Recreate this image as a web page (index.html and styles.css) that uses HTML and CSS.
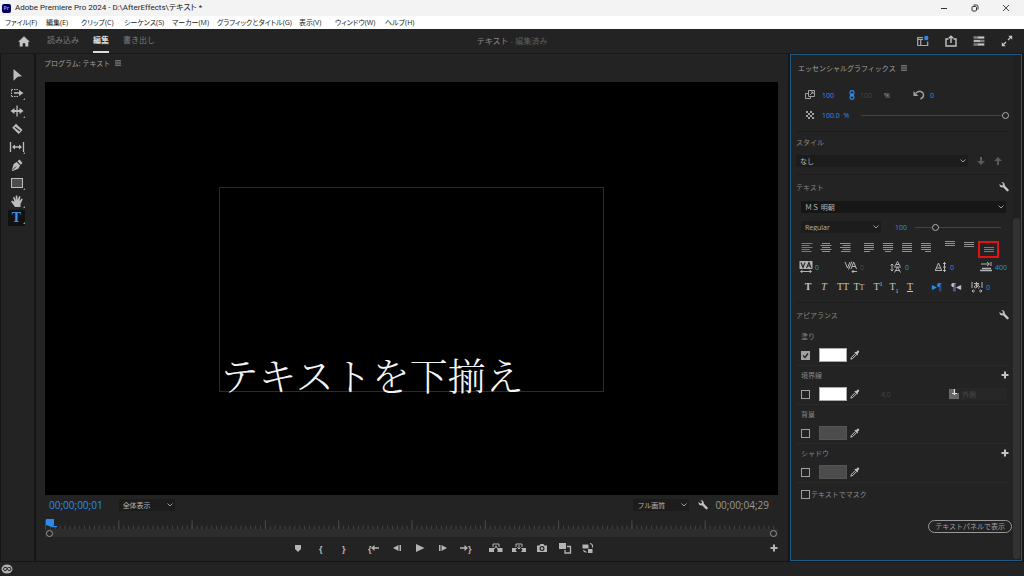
FILE: index.html
```html
<!DOCTYPE html>
<html lang="ja">
<head>
<meta charset="utf-8">
<title>Adobe Premiere Pro 2024</title>
<link rel="stylesheet" href="styles.css">
</head>
<body>
<svg class="sprite" aria-hidden="true">
  <symbol id="menu" viewBox="0 0 6 6"><path d="M0 .8h6M0 3h6M0 5.2h6" stroke="currentColor" stroke-width=".9"/></symbol>
  <symbol id="wrench" viewBox="0 0 10 10"><path d="M.6 1.9 2.3 3.6 3.8 3.2 4 1.8 2.4.4C4.200-.2 6.100 1.200 5.700 3.500L9.500 7.600c.9 1.200-.8 2.600-1.800 1.500L4 5.300C1.700 5.900.1 4 .6 1.900z" fill="currentColor"/></symbol>
  <symbol id="plus" viewBox="0 0 8 8"><path d="M4 .5v7M.5 4h7" stroke="currentColor" stroke-width="2"/></symbol>
  <symbol id="dropper" viewBox="0 0 10 10"><path d="M6 2.200 7.300.9c1-.9 2.500.5 1.600 1.600L7.600 3.800l.5.8-.9.8L4.400 2.600l.8-.9z" fill="currentColor"/><path d="M5 3.800 1.500 7.300.8 9.200l1.900-.7L6.200 5" fill="none" stroke="currentColor" stroke-width="1"/></symbol>
  <symbol id="al" viewBox="0 0 12 10"><path d="M.5 1.500h11M.5 3.500h8M.5 5.500h11M.5 7.500h8M.5 9.500h10" stroke="currentColor"/></symbol>
  <symbol id="ac" viewBox="0 0 12 10"><path d="M2 1.500h8M.5 3.500h11M2 5.500h8M.5 7.500h11M2 9.500h8" stroke="currentColor"/></symbol>
  <symbol id="ar" viewBox="0 0 12 10"><path d="M1 1.500h10.500M3.500 3.500h8M1 5.500h10.500M3.500 7.500h8M2 9.500h9.500" stroke="currentColor"/></symbol>
  <symbol id="jl" viewBox="0 0 12 10"><path d="M1 1.500h10M1 3.500h10M1 5.500h10M1 7.500h10M1 9.500h6" stroke="currentColor"/></symbol>
  <symbol id="jc" viewBox="0 0 12 10"><path d="M1 1.500h10M1 3.500h10M1 5.500h10M1 7.500h10M3 9.500h6" stroke="currentColor"/></symbol>
  <symbol id="jf" viewBox="0 0 12 10"><path d="M1 1.500h10M1 3.500h10M1 5.500h10M1 7.500h10M1 9.500h10" stroke="currentColor"/></symbol>
  <symbol id="jr" viewBox="0 0 12 10"><path d="M1 1.500h10M1 3.500h10M1 5.500h10M1 7.500h10M5 9.500h6" stroke="currentColor"/></symbol>
  <symbol id="vt" viewBox="0 0 12 10"><path d="M1 1.500h10M1 3.500h10M1 5.500h10" stroke="currentColor"/></symbol>
  <symbol id="vm" viewBox="0 0 12 10"><path d="M1 2.500h10M1 4.500h10M1 6.500h10" stroke="currentColor"/></symbol>
  <symbol id="vb" viewBox="0 0 12 10"><path d="M1 3.500h10M1 5.500h10M1 7.500h10" stroke="currentColor"/></symbol>
</svg>

<header class="titlebar">
  <svg class="app" viewBox="0 0 9 9"><rect width="9" height="9" rx="2" fill="#00005b"/><text x="1.600" y="6.400" font-size="5" font-weight="bold" fill="#99f" font-family="Open Sans">Pr</text></svg>
  <h1>Adobe Premiere Pro 2024 - D:\AfterEffects\テキスト *</h1>
  <div class="window-buttons">
    <button aria-label="最小化"><svg viewBox="0 0 8 8"><path d="M1 4.500h6" stroke="#333"/></svg></button>
    <button aria-label="元に戻す"><svg viewBox="0 0 8 8" fill="none" stroke="#333"><rect x="1" y="2.500" width="4.500" height="4.500" rx="1"/><path d="M2.500 1h3q1.500 0 1.500 1.500v3"/></svg></button>
    <button aria-label="閉じる"><svg viewBox="0 0 8 8"><path d="M1 1l6 6M7 1 1 7" stroke="#333" stroke-width=".9"/></svg></button>
  </div>
</header>
<nav class="menubar">
  <a href="#">ファイル(F)</a><a href="#">編集(E)</a><a href="#">クリップ(C)</a><a href="#">シーケンス(S)</a><a href="#">マーカー(M)</a><a href="#">グラフィックとタイトル(G)</a><a href="#">表示(V)</a><a href="#">ウィンドウ(W)</a><a href="#">ヘルプ(H)</a>
</nav>
<div class="workspace">
  <nav class="tabs">
    <a class="home" href="#" aria-label="ホーム"><svg viewBox="0 0 12 11"><path d="M6 .3 11.800 5.700h-1.500V10.500H7.300V7.200H4.700v3.300H1.700V5.700H.2z" fill="#c4c4c4"/></svg></a>
    <a href="#">読み込み</a><a class="active" href="#">編集</a><a href="#">書き出し</a>
  </nav>
  <p class="project">テキスト <span>- 編集済み</span></p>
  <div class="workspace-tools">
    <button aria-label="ワークスペース"><svg viewBox="0 0 12 12"><path d="M6 2.500H.7v8h10V6.500M.7 4.300H6M3.700 4v6" fill="none" stroke="#a8a8a8" stroke-width="1.200"/><circle cx="9.300" cy="3" r="2.200" fill="#2d8ceb"/></svg></button>
    <button aria-label="クイック書き出し"><svg viewBox="0 0 12 12" fill="none" stroke="#c4c4c4" stroke-width="1.400"><path d="M3.500 4H1v7h10V4H8.500M6 8V1.500M3.800 3.300 6 1.200l2.200 2.100"/></svg></button>
    <button aria-label="進行状況"><svg viewBox="0 0 12 12"><path d="M.5 2.500h11M.5 6h11M.5 9.500h11" stroke="#808080" stroke-width="2.400"/><path d="M5 2.500h6M1 6h6M5 9.500h6" stroke="#c8c8c8" stroke-width="1.300"/></svg></button>
    <button aria-label="全画面"><svg viewBox="0 0 12 12"><path d="M10.500 1.500 7 5M5 7l-3.500 3.500" stroke="#c4c4c4" stroke-width="1.300"/><path d="M7.200.8h4v4zM.8 7.200v4h4z" fill="#c4c4c4"/></svg></button>
  </div>
</div>

<main>
  <aside class="tools">
    <button aria-label="選択"><svg viewBox="0 0 16 16"><path d="M4.500 2 13 9.200l-4.200.5-4.300 4z"/></svg></button>
    <button class="more" aria-label="トラックの前方選択"><svg viewBox="0 0 16 16"><path d="M2.500 4.500H10M2.500 11.500H10M2.500 5v6" fill="none" stroke="currentColor" stroke-dasharray="1.500 1"/><path d="M5 7.200h5V5l4.500 3L10 11V8.800H5z"/></svg></button>
    <button class="more" aria-label="リップル"><svg viewBox="0 0 16 16"><path d="M7.400 2.500h1.300v11H7.400zM1.500 8l4-3v2h5V5l4 3-4 3V9h-5v2z"/></svg></button>
    <button aria-label="レーザー"><svg viewBox="0 0 16 16"><path d="M7 2.800 13.500 9l-3.800 4L3.200 6.800z"/><path d="m6 6.200 5 3.800" stroke="#232323" stroke-width="1.200"/></svg></button>
    <button class="more" aria-label="スリップ"><svg viewBox="0 0 16 16"><path d="M1.500 3v10M14.500 3v10M5 8h6" stroke="currentColor" stroke-width="1.300"/><path d="m3 8 3-2.500v5zM13 8l-3-2.500v5z"/></svg></button>
    <button aria-label="ペン"><svg viewBox="0 0 16 16"><path d="M10.500 2.500 13.500 6 11.800 7.700 8.500 4.300zM7.700 5l3.500 3.500-2 3.200L3.500 14 2.800 13.300 4.600 7z"/><path d="m3.500 13 3.500-3.500" stroke="#232323" stroke-width=".9"/></svg></button>
    <button class="more" aria-label="長方形"><svg viewBox="0 0 16 16"><rect x="2.500" y="3.500" width="11" height="9" fill="#4c4c4c" stroke="currentColor"/></svg></button>
    <button class="more" aria-label="手のひら"><svg viewBox="0 0 16 16"><path d="m6 14-4-5.500 1.200-.9L5.500 9 4 4.200l1.300-.5L6.700 7 6.800 2.500h1.400L8.700 7l1.400-4 1.300.4L10.600 8l2-2.600 1.200.7L11.500 11v3z"/></svg></button>
    <button class="more type" aria-label="横書き文字"><span>T</span></button>
  </aside>

  <section class="program">
    <h2>プログラム: テキスト <svg><use href="#menu"/></svg></h2>
    <div class="monitor"><div class="text-frame"><p>テキストを下揃え</p></div></div>
    <div class="monitor-controls">
      <time class="current">00;00;00;01</time>
      <select aria-label="ズーム"><option>全体表示</option></select>
      <span class="spacer"></span>
      <select aria-label="画質"><option>フル画質</option></select>
      <button class="icon" aria-label="設定"><svg><use href="#wrench"/></svg></button>
      <time>00;00;04;29</time>
    </div>
    <div class="timeline">
      <svg class="ruler" viewBox="0 0 733 10" preserveAspectRatio="none">
        <defs>
          <pattern id="minor" width="4.887" height="10" patternUnits="userSpaceOnUse"><path d="M.5 7v3" stroke="#444"/></pattern>
          <pattern id="major" width="73.300" height="10" patternUnits="userSpaceOnUse"><path d="M.5 2v8" stroke="#484848"/></pattern>
        </defs>
        <rect width="733" height="10" fill="url(#minor)"/><rect width="733" height="10" fill="url(#major)"/>
      </svg>
      <svg class="playhead" viewBox="0 0 12 10"><path d="M1 1h8v6l-1 1h4v1.200H7.500L1 7z" fill="#2d8ceb"/></svg>
      <div class="zoombar"><i></i><i></i></div>
    </div>
    <div class="transport">
      <div class="group">
        <button aria-label="マーカーを追加"><svg viewBox="0 0 14 12"><path d="M4 3h6v4L7 10 4 7z"/></svg></button>
        <button aria-label="インをマーク">{</button>
        <button aria-label="アウトをマーク">}</button>
      </div>
      <div class="group">
        <button aria-label="インへ移動">{<svg class="arrow" viewBox="0 0 8 8"><path d="m0 4 3.500-3v2.200H8v1.600H3.500V7z"/></svg></button>
        <button aria-label="前のフレーム"><svg viewBox="0 0 14 12"><path d="M8.500 3v6L3 6zM9.500 3H11v6H9.500z"/></svg></button>
        <button aria-label="再生"><svg viewBox="0 0 14 12"><path d="M3 2v8l8.500-4z"/></svg></button>
        <button aria-label="次のフレーム"><svg viewBox="0 0 14 12"><path d="M5.500 3v6L11 6zM3 3h1.500v6H3z"/></svg></button>
        <button aria-label="アウトへ移動"><svg class="arrow" viewBox="0 0 8 8"><path d="M8 4 4.500 1v2.200H0v1.600h4.500V7z"/></svg>}</button>
      </div>
      <div class="group">
        <button aria-label="リフト"><svg viewBox="0 0 14 12"><path d="M0 6h5v4H0zM8.500 6h5v4h-5z"/><path d="M4 5V2h6v3M7 3.500v2M5 7l2-2.500L9 7" fill="none" stroke="currentColor"/></svg></button>
        <button aria-label="抽出"><svg viewBox="0 0 14 12"><path d="M0 6h5L3.500 8 5 10H0zM9 6h5v4H9l1.500-2z"/><path d="M4 5V2h6v3M7 3v4M5.500 5.500 7 7l1.500-1.500" fill="none" stroke="currentColor"/></svg></button>
        <button aria-label="フレームを書き出し"><svg viewBox="0 0 14 12"><path d="M2 3.500h2.500L5.500 2h3l1 1.500H12V10H2z"/><circle cx="7" cy="6.500" r="1.900" stroke="#232323" stroke-width="1.200"/></svg></button>
        <button aria-label="比較表示"><svg viewBox="0 0 14 12"><path d="M1 1h7v6H1z"/><path d="M9 4.500h3.500V11H7V8" fill="none" stroke="currentColor" stroke-width="1.300"/></svg></button>
        <button aria-label="プロキシの切り替え"><svg viewBox="0 0 14 12"><path d="M1.500 2.500h6v4h-6zM7 7h4.500v4H7z"/><path d="M9 1.500q3 .5 2.500 4M2.500 8q.5 2 3 2.200" fill="none" stroke="currentColor" stroke-width="1.200"/></svg></button>
      </div>
      <button class="add" aria-label="ボタンエディター"><svg><use href="#plus"/></svg></button>
    </div>
  </section>

  <section class="graphics">
    <div class="content">
      <h2>エッセンシャルグラフィックス <svg><use href="#menu"/></svg></h2>
      <div class="block transform">
        <div class="row scale">
          <svg viewBox="0 0 10 10" fill="none" stroke="currentColor"><path d="M3.500.5h6v6h-6zM3 3.500H.5v5h5V7M5 5l3-3M6 2h2v2"/></svg>
          <output>100</output>
          <svg class="link" viewBox="0 0 6 10" fill="none" stroke="currentColor" stroke-width="1.200"><rect x="1" y=".7" width="4" height="4" rx="1.800"/><rect x="1" y="5.300" width="4" height="4" rx="1.800"/><path d="M3 3v4"/></svg>
          <output class="off">100</output>
          <span>%</span>
          <svg viewBox="0 0 12 10"><path d="M3 3q4-3.500 7 0 1.800 4-2.500 6" fill="none" stroke="currentColor" stroke-width="1.400"/><path d="M.5 1v5h5z" fill="currentColor"/></svg>
          <output>0</output>
        </div>
        <div class="row opacity">
          <svg viewBox="0 0 10 10"><path d="M1 1h2v2h2V1h2v2h2v2H7v2h2v2H7V7H5v2H3V7H1V5h2V3H1zM3 5v2h2V5zM5 3v2h2V3z" fill="currentColor" fill-rule="evenodd"/></svg>
          <output>100.0 &nbsp;%</output>
          <input type="range" aria-label="不透明度" min="0" max="100" value="100">
        </div>
      </div>
      <div class="block style">
        <h3 id="style-label">スタイル</h3>
        <div class="row">
          <select class="wide" aria-labelledby="style-label"><option>なし</option></select>
          <button class="push" aria-label="下へ適用"><svg viewBox="0 0 8 8"><path d="M3 0h2v4h3L4 8 0 4h3z"/></svg></button>
          <button class="push" aria-label="上へ適用"><svg viewBox="0 0 8 8"><path d="M3 8h2V4h3L4 0 0 4h3z"/></svg></button>
        </div>
      </div>
      <div class="block text">
        <h3>テキスト <button class="icon" aria-label="テキスト設定"><svg><use href="#wrench"/></svg></button></h3>
        <div class="row font"><select aria-label="フォント"><option>ＭＳ 明朝</option></select></div>
        <div class="row weight">
          <select aria-label="フォントスタイル"><option>Regular</option></select>
          <output>100</output>
          <input type="range" aria-label="フォントサイズ" min="0" max="400" value="88">
        </div>
        <div class="row align">
          <div><button class="on" aria-label="左揃え"><svg><use href="#al"/></svg></button><button aria-label="中央揃え"><svg><use href="#ac"/></svg></button><button aria-label="右揃え"><svg><use href="#ar"/></svg></button></div>
          <div><button aria-label="均等左"><svg><use href="#jl"/></svg></button><button aria-label="均等中央"><svg><use href="#jc"/></svg></button><button aria-label="両端揃え"><svg><use href="#jf"/></svg></button><button aria-label="均等右"><svg><use href="#jr"/></svg></button></div>
          <div><button aria-label="上揃え"><svg><use href="#vt"/></svg></button><button aria-label="垂直中央"><svg><use href="#vm"/></svg></button><button class="on marked" aria-label="下揃え"><svg><use href="#vb"/></svg></button></div>
        </div>
        <div class="row metrics">
          <label><svg viewBox="0 0 14 12"><path d="M.5 0h13v8H.5z" fill="currentColor"/><path d="m2 1.500 2 5 2-5M7.500 7 10 1.500 12 7M8.500 5h3" fill="none" stroke="#232323" stroke-width="1.100"/><path d="M2 10.500h10M3.500 9 1.500 10.500l2 1.500M10.500 9l2 1.500-2 1.500" fill="none" stroke="currentColor"/></svg><output>0</output></label>
          <label><svg viewBox="0 0 14 12" fill="none" stroke="currentColor"><path d="m1 1 2.500 6L6 1M4.500 8.500 8 .5M7 8l2.700-7L12.500 8M8 5.500h4M8 10.500h5M9.500 9 8 10.500 9.500 12"/></svg><output class="off">0</output></label>
          <label><svg viewBox="0 0 14 12" fill="none" stroke="currentColor"><path d="m6 5 2.500-4.500L11 5M7 3.500h3M5.500 11.500l3-5.500 3 5.500M6.500 9.500h4M5 6h7M3 3v7M1.500 4.500 3 3l1.500 1.500M1.500 8.500 3 10l1.500-1.500"/></svg><output>0</output></label>
          <label><svg viewBox="0 0 14 12" fill="none" stroke="currentColor"><path d="M1.500 9 4.500 2l3 7M2.500 7h4M1 9.500h7M10.500 1v10M9 3l1.500-1.500L12 3M9 9l1.500 1.500L12 9M9 6h3"/></svg><output>0</output></label>
          <label><svg viewBox="0 0 14 12" fill="none" stroke="currentColor"><path d="M2 3h8M8 1l2.500 2L8 5M12 1v4"/><path d="M3 7.500h9M1 9.500h12" stroke-width="1.500"/></svg><output>400</output></label>
        </div>
        <div class="row faux">
          <div><button class="bold">T</button><button class="italic">T</button></div>
          <div><button>TT</button><button>T<small>T</small></button></div>
          <div><button>T<sup>1</sup></button><button>T<sub>1</sub></button><button class="underline">T</button></div>
          <div class="dir"><button class="on" aria-label="左から右">▸¶</button><button aria-label="右から左">¶◂</button></div>
          <label><svg viewBox="0 0 14 12" fill="none" stroke="currentColor"><path d="M2 1v6M12 1v6M4 2.500h5M6.500 1v5M9 4Q4 3.500 4.500 6T8.500 4.500Q11 6 8 7.500M2 10h3M9 10h3M3.500 8.500 2 10l1.500 1.500M10.500 8.500 12 10l-1.500 1.500"/></svg><output>0</output></label>
        </div>
      </div>
      <div class="block appearance">
        <h3>アピアランス <button class="icon" aria-label="アピアランス設定"><svg><use href="#wrench"/></svg></button></h3>
        <div class="paint"><h4><label for="fill">塗り</label></h4>
          <div class="row"><input type="checkbox" id="fill" checked><button class="swatch" aria-label="塗りの色"></button><button class="icon" aria-label="スポイト"><svg><use href="#dropper"/></svg></button></div></div>
        <div class="paint"><h4><label for="stroke">境界線</label><button class="icon" aria-label="境界線を追加"><svg><use href="#plus"/></svg></button></h4>
          <div class="row"><input type="checkbox" id="stroke"><button class="swatch" aria-label="境界線の色"></button><button class="icon" aria-label="スポイト"><svg><use href="#dropper"/></svg></button><span class="stroke-width">4.0</span>
            <div class="side"><svg viewBox="0 0 10 10"><path d="M0 0h6v4h4v6H0z" fill="#666"/><path d="M5.500 0v6M3 4.500h5" stroke="#ddd" stroke-width="1.200"/></svg><select aria-label="境界線の位置" disabled><option>外側</option></select></div></div></div>
        <div class="paint"><h4><label for="back">背景</label></h4>
          <div class="row"><input type="checkbox" id="back"><button class="swatch grey" aria-label="背景の色"></button><button class="icon" aria-label="スポイト"><svg><use href="#dropper"/></svg></button></div></div>
        <div class="paint"><h4><label for="shadow">シャドウ</label><button class="icon" aria-label="シャドウを追加"><svg><use href="#plus"/></svg></button></h4>
          <div class="row"><input type="checkbox" id="shadow"><button class="swatch grey" aria-label="シャドウの色"></button><button class="icon" aria-label="スポイト"><svg><use href="#dropper"/></svg></button></div></div>
        <label class="mask"><input type="checkbox">テキストでマスク</label>
      </div>
      <button class="open-panel">テキストパネルで表示</button>
    </div>
    <div class="scrollbar"><i></i></div>
  </section>
</main>
<footer class="status">
  <svg viewBox="0 0 12 10"><ellipse cx="6" cy="5" rx="5.500" ry="4.500" fill="#b0b0b0"/><path d="M5.500 6.500q-3 1-3-1.500t3-1.500l2 3q2.500.5 2.500-1.500T7.500 3.500q-1.500 0-2 2.500" fill="none" stroke="#232323"/></svg>
</footer>
</body>
</html>
```

FILE: styles.css
```css
* { box-sizing: border-box; }
body {
  margin: 0;
  min-height: 100vh;
  display: flex;
  flex-direction: column;
  background: #161616;
  color: #a0a0a0;
  font-family: "Open Sans", "Noto Sans CJK JP", sans-serif;
  font-size: 7px;
  line-height: 1;
}
h1, h2, h3, h4, p { margin: 0; font-size: inherit; font-weight: 400; }
a { color: inherit; text-decoration: none; }
svg { display: block; flex: none; }
button {
  display: flex;
  align-items: center;
  justify-content: center;
  padding: 0;
  border: 0;
  background: none;
  color: inherit;
  font: inherit;
}
button svg:not([fill]) { fill: currentColor; }
.sprite { position: absolute; width: 0; height: 0; }

.titlebar {
  display: flex;
  align-items: center;
  height: 16px;
  padding: 0 8px 0 2px;
  gap: 4px;
  background: #f3f3f3;
  color: #222;
}
.titlebar h1 { font-family: Roboto, "Noto Sans CJK JP", sans-serif; font-size: 8px; font-feature-settings: "palt"; }
.app { width: 9px; height: 9px; }
.window-buttons { display: flex; gap: 23px; margin-left: auto; padding-right: 6px; }
.window-buttons svg { width: 8px; height: 8px; }
.menubar {
  display: grid;
  grid-template-columns: 41px 35px 43px 48px 45px 82px 36px 50px auto;
  align-items: center;
  height: 13px;
  padding-left: 5px;
  background: #fff;
  color: #222;
  white-space: nowrap;
  font-feature-settings: "palt";
}

.workspace {
  display: grid;
  grid-template-columns: 1fr auto 1fr;
  height: 25px;
  background: #232323;
  border-bottom: 1px solid #191919;
  font-size: 8px;
}
.tabs { display: flex; gap: 14px; color: #7c7c7c; }
.tabs a { display: flex; align-items: center; border-bottom: 2px solid transparent; }
.tabs .home { margin-left: 18px; margin-right: 3px; padding-top: 3px; }
.home svg { width: 12px; height: 11px; }
.tabs .active { color: #ddd; border-color: #ddd; font-weight: 700; }
.project { align-self: center; color: #8a8a8a; }
.project span { color: #5c5c5c; }
.workspace-tools { display: flex; justify-content: flex-end; padding-right: 3px; }
.workspace-tools button { width: 28px; }
.workspace-tools svg { width: 12px; height: 12px; }

main { flex: 1; display: flex; gap: 2px; padding: 0 1px 1px; }
.tools {
  display: flex;
  flex-direction: column;
  align-items: center;
  width: 33px;
  padding: 12px 2px 0 0;
  background: #232323;
  color: #bcbcbc;
}
.tools button { position: relative; width: 17px; height: 18px; }
.tools svg { width: 16px; height: 16px; }
.tools .more::after {
  content: "";
  position: absolute;
  right: 0;
  bottom: 2px;
  border: 1px solid #999;
  border-left-color: transparent;
  border-top-color: transparent;
}
.tools .type {
  height: 16px;
  background: #111;
  color: #3b94e8;
  font: 700 14px "Liberation Serif", serif;
}

.program {
  flex: 1;
  display: flex;
  flex-direction: column;
  min-width: 0;
  padding: 0 10px 2px 9px;
  background: #232323;
}
h2 { display: flex; align-items: center; gap: 5px; }
h2 svg { width: 6px; height: 6px; }
.program h2 { height: 18px; margin: 0 0 10px -1px; }
.monitor { position: relative; flex: 1; min-height: 200px; background: #000; }
.text-frame {
  position: absolute;
  left: 23.8%;
  top: 25.4%;
  width: 52.5%;
  height: 49.6%;
  display: flex;
  align-items: flex-end;
  border: 1px solid #6c1016;
}
.text-frame p {
  margin-bottom: -2px;
  color: #f4f4f4;
  font: 300 38px/38px "Noto Serif CJK JP", "Noto Sans CJK JP", serif;
  white-space: nowrap;
}
select {
  appearance: none;
  height: 12px;
  padding: 0 12px 0 4px;
  border: 0;
  border-radius: 1px;
  background: #1c1c1c url("data:image/svg+xml,%3Csvg xmlns='http://www.w3.org/2000/svg' viewBox='0 0 6 4'%3E%3Cpath d='M.5 .5 3 3 5.500 .5' fill='none' stroke='%23999'/%3E%3C/svg%3E") no-repeat right 2px center / 6px 4px;
  color: #b4b4b4;
  font: inherit;
}
.monitor-controls { display: flex; align-items: center; height: 23px; padding: 0 9px 3px 4px; }
.monitor-controls select { width: 56px; }
time { color: #999; font-size: 10px; }
.current { margin-right: 16px; color: #2d8ceb; }
.spacer { flex: 1; }
.icon { color: #c4c4c4; }
.icon svg { width: 10px; height: 10px; }
.monitor-controls .icon { margin: 0 7px 0 9px; }
.timeline { position: relative; }
.ruler { width: 100%; height: 11px; }
.playhead { position: absolute; left: 0; top: 0; width: 12px; height: 10px; }
.zoombar {
  display: flex;
  justify-content: space-between;
  align-items: center;
  height: 8px;
  padding: 0 1px;
  background: #2d2d2d;
}
.zoombar i { width: 7px; height: 7px; border: 1px solid #999; border-radius: 50%; background: #232323; }
.transport { display: flex; align-items: center; height: 22px; padding-left: 32.9%; color: #b4b4b4; }
.group { display: flex; margin-right: 7px; }
.transport button { width: 23px; font-size: 9px; font-weight: 700; }
.transport svg { width: 14px; height: 12px; }
.transport .arrow { width: 8px; height: 8px; }
.transport .add { width: 8px; margin-left: auto; }
.transport .add svg { width: 8px; height: 8px; }

.graphics {
  display: flex;
  width: 232px;
  margin-right: 1px;
  border: 1px solid #205a86;
  background: #232323;
}
.content { flex: 1; padding: 0 4px 8px 5px; min-width: 0; }
.scrollbar { display: flex; align-items: flex-end; width: 8px; padding: 30px 1px 1px 0; background: #202020; }
.scrollbar i { width: 100%; height: 72%; border-radius: 3px; background: #323232; }
.graphics h2 { height: 26px; padding-left: 2px; }
.block { border-bottom: 1px solid #1c1c1c; }
.row { display: flex; align-items: center; height: 20px; }
output { color: #2d8ceb; }
output.off { color: #484848; }
.transform { padding: 4px 0 6px; }
.transform svg { width: 10px; height: 10px; margin-left: 9px; }
.scale { display: grid; grid-template-columns: 26px 25px 13px 24px 29px 17px auto; justify-content: start; }
.transform .link { width: 6px; margin-left: 2px; color: #2d8ceb; }
.transform .scale svg:nth-of-type(3) { width: 12px; margin-left: 0; }
.opacity { display: grid; grid-template-columns: 26px 39px 1fr; }
input[type="range"] {
  appearance: none;
  min-width: 0;
  height: 8px;
  margin: 0;
  background: linear-gradient(#444, #444) no-repeat center / 100% 1px;
}
input[type="range"]::-webkit-slider-thumb {
  appearance: none;
  width: 7px;
  height: 7px;
  border: 1px solid #b0b0b0;
  border-radius: 50%;
  background: #232323;
}
h3 { display: flex; align-items: center; justify-content: space-between; height: 20px; color: #858585; }
.style { padding-bottom: 4px; }
.style .row { gap: 9px; height: 18px; }
.wide { flex: 1; }
.style .row button { color: #5a5a5a; }
.style .row svg { width: 8px; height: 8px; }
.style .push:last-child { margin-right: 7px; }
.text { padding: 2px 0 5px; }
.font select { flex: 1; margin: 0 3px 0 5px; background-color: #161616; }
.weight select { width: 80px; margin: 0 14px 0 5px; }
.weight input { flex: 1; margin: 0 8px; }
.row.align { padding-left: 1px; }
.row.align div { display: flex; margin-right: 5px; }
.align button { width: 19px; height: 17px; color: #909090; }
.align svg { width: 12px; height: 10px; }
.row.align div:last-child { margin-right: 0; }
.align .marked { width: 21px; margin: 4px 0 0; border: 2px solid #e01212; }
.align .on, .faux .on { color: #2d8ceb; }
.metrics { display: grid; grid-template-columns: repeat(5, 45px); padding-left: 3px; }
.metrics label, .faux label { display: flex; align-items: center; gap: 2px; color: #b4b4b4; }
.metrics svg, .faux svg { width: 14px; height: 12px; }
.faux { padding-left: 4px; color: #c4c4c4; font-family: "Liberation Serif", serif; font-size: 10px; }
.faux div { display: flex; margin-right: 3px; }
.faux button { display: block; width: 16px; height: 16px; line-height: 16px; white-space: nowrap; }
.faux .bold { font-weight: 700; }
.faux .italic { font-style: italic; }
.faux .underline { text-decoration: underline; }
.faux small { font-size: 8px; }
.faux sup, .faux sub { font-size: 6px; line-height: 1; }
.faux .dir { gap: 3px; margin: 0 6px 0 8px; }
.faux output { font: 7px "Open Sans", sans-serif; }
.appearance { border: 0; padding-top: 2px; }
.appearance h3 { margin-bottom: 2px; }
.paint { padding-left: 5px; border-bottom: 1px solid #2a2a2a; }
h4 { display: flex; align-items: center; justify-content: space-between; height: 18px; color: #858585; }
h4 .icon svg { width: 8px; height: 8px; }
input[type="checkbox"] { appearance: none; width: 9px; height: 9px; margin: 0; border: 1px solid #a0a0a0; }
input[type="checkbox"]:checked {
  background: #a0a0a0 url("data:image/svg+xml,%3Csvg xmlns='http://www.w3.org/2000/svg' viewBox='0 0 7 7'%3E%3Cpath d='M1 3.500 3 5.500 6 1.500' fill='none' stroke='%23222' stroke-width='1.300'/%3E%3C/svg%3E") center / 7px 7px;
}
.swatch { width: 28px; height: 14px; margin: 0 3px 0 9px; border: 1px solid #aaa; background: #fff; }
.swatch.grey { background: #4c4c4c; border-color: #555; }
.stroke-width { margin-left: 21px; color: #444; }
.side { display: flex; align-items: center; gap: 3px; margin-left: auto; margin-right: 2px; background: #272727; }
.side svg { width: 10px; height: 10px; }
.side select { width: 45px; background: none; color: #484848; opacity: 1; padding-left: 0; }
.mask { display: flex; align-items: center; gap: 1px; height: 22px; padding-left: 5px; color: #8c8c8c; }
.open-panel {
  height: 13px;
  margin: 15px -3px 0 auto;
  padding: 0 6px;
  border: 1px solid #999;
  border-radius: 7px;
  color: #a0a0a0;
}
.status { display: flex; align-items: center; height: 14px; padding-left: 1px; background: #232323; }
.status svg { width: 12px; height: 10px; }
```
